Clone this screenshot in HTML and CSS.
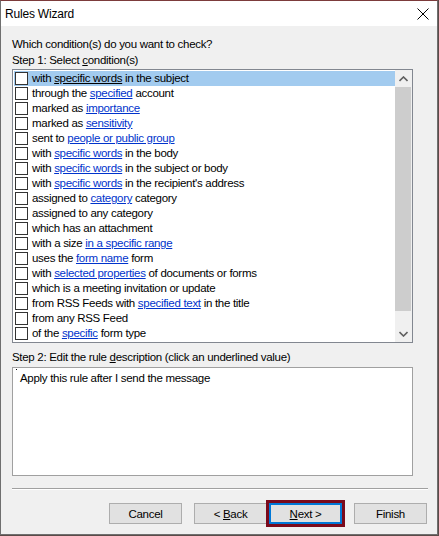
FILE: index.html
```html
<!DOCTYPE html>
<html>
<head>
<meta charset="utf-8">
<title>Rules Wizard</title>
<link rel="stylesheet" href="styles.css">
</head>
<body>
<div class="window">
  <div class="titlebar">
    <span class="title">Rules Wizard</span>
    <svg class="close" width="12" height="12" viewBox="0 0 12 12"><path d="M0.5 0.5 L11.5 11.5 M11.5 0.5 L0.5 11.5" stroke="#000" stroke-width="1" fill="none"/></svg>
  </div>
  <div class="content">
    <div class="label">Which condition(s) do you want to check?</div>
    <div class="label step1">Step 1: Select <u>c</u>ondition(s)</div>
    <div class="listbox">
      <div class="rows">
        <div class="row selected"><span class="cb"></span><span class="txt">with <a>specific words</a> in the subject</span></div>
        <div class="row"><span class="cb"></span><span class="txt">through the <a>specified</a> account</span></div>
        <div class="row"><span class="cb"></span><span class="txt">marked as <a>importance</a></span></div>
        <div class="row"><span class="cb"></span><span class="txt">marked as <a>sensitivity</a></span></div>
        <div class="row"><span class="cb"></span><span class="txt">sent to <a>people or public group</a></span></div>
        <div class="row"><span class="cb"></span><span class="txt">with <a>specific words</a> in the body</span></div>
        <div class="row"><span class="cb"></span><span class="txt">with <a>specific words</a> in the subject or body</span></div>
        <div class="row"><span class="cb"></span><span class="txt">with <a>specific words</a> in the recipient's address</span></div>
        <div class="row"><span class="cb"></span><span class="txt">assigned to <a>category</a> category</span></div>
        <div class="row"><span class="cb"></span><span class="txt">assigned to any category</span></div>
        <div class="row"><span class="cb"></span><span class="txt">which has an attachment</span></div>
        <div class="row"><span class="cb"></span><span class="txt">with a size <a>in a specific range</a></span></div>
        <div class="row"><span class="cb"></span><span class="txt">uses the <a>form name</a> form</span></div>
        <div class="row"><span class="cb"></span><span class="txt">with <a>selected properties</a> of documents or forms</span></div>
        <div class="row"><span class="cb"></span><span class="txt">which is a meeting invitation or update</span></div>
        <div class="row"><span class="cb"></span><span class="txt">from RSS Feeds with <a>specified text</a> in the title</span></div>
        <div class="row"><span class="cb"></span><span class="txt">from any RSS Feed</span></div>
        <div class="row"><span class="cb"></span><span class="txt">of the <a>specific</a> form type</span></div>
      </div>
      <div class="scrollbar">
        <div class="sb-btn"><svg width="9" height="6" viewBox="0 0 9 6"><path d="M0.5 5 L4.5 1 L8.5 5" stroke="#606060" stroke-width="1.6" fill="none"/></svg></div>
        <div class="sb-thumb"></div>
        <div class="sb-track"></div>
        <div class="sb-btn"><svg width="9" height="6" viewBox="0 0 9 6"><path d="M0.5 1 L4.5 5 L8.5 1" stroke="#606060" stroke-width="1.6" fill="none"/></svg></div>
      </div>
    </div>
    <div class="label step2">Step 2: Edit the rule <u>d</u>escription (click an underlined value)</div>
    <div class="desc"><span class="dot"></span>Apply this rule after I send the message</div>
    <div class="sep"></div>
    <div class="buttons">
      <div class="btn"><span>Cancel</span></div>
      <div class="btn back"><span>&lt; <u>B</u>ack</span></div>
      <div class="btn next"><span><u>N</u>ext &gt;</span></div>
      <div class="btn finish"><span>Finish</span></div>
    </div>
  </div>
</div>
</body>
</html>
```
FILE: styles.css
```css
* { box-sizing: border-box; }
html, body { margin: 0; padding: 0; }
body {
  background: #5b4b48;
  width: 439px;
  height: 536px;
  font-family: "Liberation Sans", Arial, sans-serif;
  font-size: 11.5px;
  letter-spacing: -0.3px;
  color: #000;
}
.window {
  width: 438px;
  height: 535px;
  border: 1px solid #6f6f6f;
  border-top-color: #7c3b3b;
  background: #f0f0f0;
  display: flex;
  flex-direction: column;
}
.titlebar {
  height: 25px;
  background: #fff;
  display: flex;
  align-items: center;
  justify-content: space-between;
  padding: 0 8px 0 4px;
}
.title { font-size: 12px; line-height: 16px; letter-spacing: -0.2px; }
.close { display: block; }
.content {
  flex: 1;
  padding: 10px 9px 0 11px;
  display: flex;
  flex-direction: column;
}
.label { line-height: 16px; height: 16px; white-space: nowrap; }
.step1 { margin-bottom: 1px; }
.listbox {
  width: 401px;
  height: 274px;
  border: 1px solid #828790;
  background: #fff;
  display: flex;
}
.rows {
  flex: 1;
  padding: 1px 0 0 1px;
}
.row {
  height: 15px;
  display: flex;
  align-items: center;
  white-space: nowrap;
}
.row.selected { background: #a2cbef; }
.row.selected a { color: #000; }
.cb {
  width: 13px;
  height: 13px;
  border: 1px solid #333;
  background: #fff;
  margin-left: 1px;
  margin-right: 4px;
  flex: none;
}
.txt { line-height: 15px; }
a { color: #0033cc; text-decoration: underline; }
.scrollbar {
  width: 17px;
  background: #f0f0f0;
  display: flex;
  flex-direction: column;
}
.sb-btn {
  height: 17px;
  display: flex;
  align-items: center;
  justify-content: center;
  flex: none;
}
.sb-btn svg { display: block; }
.sb-thumb {
  height: 224px;
  width: 16px;
  background: #cdcdcd;
  flex: none;
}
.sb-track { flex: 1; }
.step2 { margin-top: 6px; }
.desc {
  margin-top: 2px;
  width: 401px;
  height: 109px;
  border: 1px solid #a0a0a0;
  background: #fff;
  padding: 2px 0 0 7px;
  line-height: 16px;
  position: relative;
}
.dot {
  position: absolute;
  left: 3px;
  top: 1px;
  width: 1px;
  height: 1px;
  background: #000;
}
.sep {
  margin-top: 12px;
  width: 416px;
  height: 2px;
  border-top: 1px solid #a0a0a0;
  border-bottom: 1px solid #fff;
}
.buttons {
  margin-top: 13px;
  margin-right: 1px;
  display: flex;
  justify-content: flex-end;
}
.btn {
  width: 73px;
  height: 21px;
  border: 1px solid #adadad;
  background: #e1e1e1;
  display: flex;
  align-items: center;
  justify-content: center;
  line-height: 16px;
  white-space: pre;
}
.back { margin-left: 12px; }
.next {
  margin-left: 2px;
  border: 2px solid #0078d7;
  outline: 3px solid #7a0a1c;
  outline-offset: 0;
}
.finish { margin-left: 12px; }
```
